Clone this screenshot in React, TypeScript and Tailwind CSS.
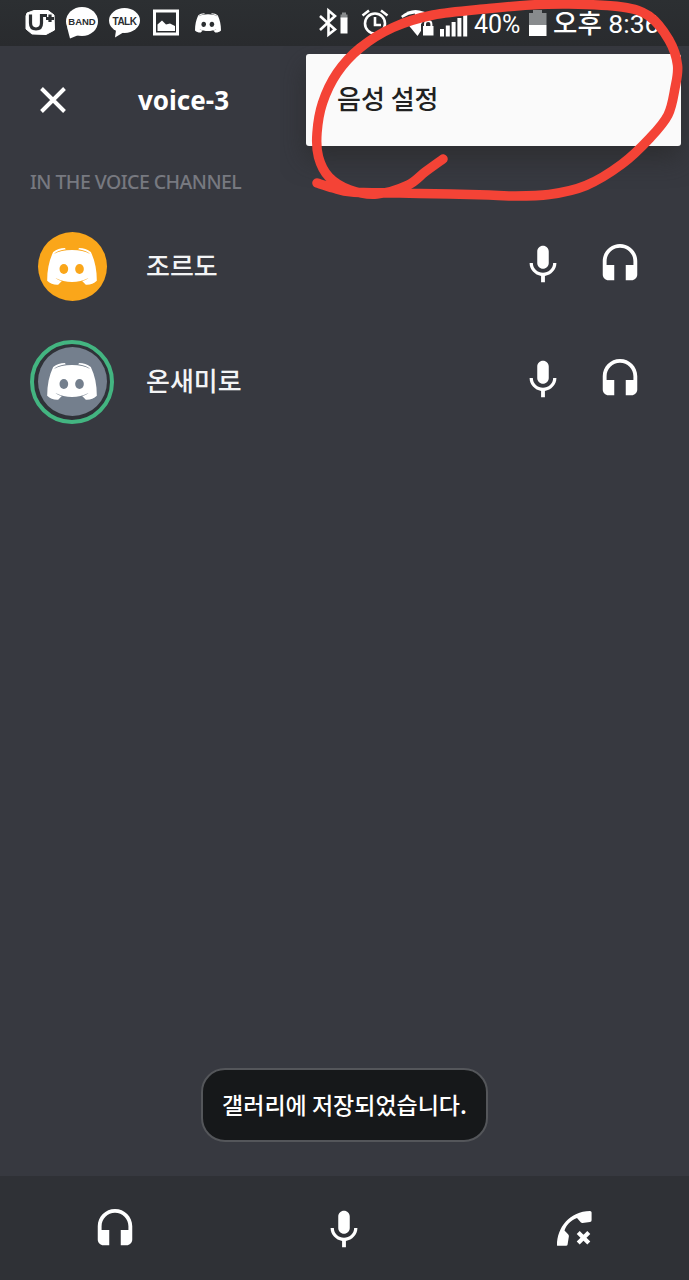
import React from "react";

function Mic() {
  return (
    <svg className="size-[46px] shrink-0" viewBox="0 0 24 24" fill="#fff">
      <path d="M12 14c1.66 0 3-1.34 3-3V5c0-1.66-1.34-3-3-3S9 3.34 9 5v6c0 1.66 1.34 3 3 3zm5.3-3c0 3-2.54 5.1-5.3 5.1S6.7 14 6.7 11H5c0 3.41 2.72 6.23 6 6.72V21h2v-3.28c3.28-.48 6-3.3 6-6.72h-1.7z" />
    </svg>
  );
}

function Headphones() {
  return (
    <svg className="size-[46px] shrink-0" viewBox="0 0 24 24" fill="#fff">
      <path d="M12 1c-4.97 0-9 4.03-9 9v7c0 1.66 1.34 3 3 3h3v-8H5v-2c0-3.87 3.13-7 7-7s7 3.13 7 7v2h-4v8h3c1.66 0 3-1.34 3-3v-7c0-4.97-4.03-9-9-9z" />
    </svg>
  );
}

function HangUp() {
  return (
    <svg className="size-[46px] shrink-0" viewBox="0 0 46 46">
      <path
        fill="#fff"
        d="M6 38.500C5.800 20 19 4.500 39 4q1.600 0 1.600 1.600v7.600q0 1.600-1.600 1.800L31.500 16q-1 .1-1.800-.8L26 11C19.500 13.500 15 18.500 13.500 23.500l3.600 3.800q.9.900.8 2L16.600 37.500q-.2 1.300-1.600 1.300H7.500q-1.500 0-1.500-.3z"
      />
      <path d="M27.200 25.500l10.600 10.600M37.800 25.500l-10.600 10.600" stroke="#fff" strokeWidth="4.200" />
    </svg>
  );
}

function Mascot({ className, eyes }: { className: string; eyes: string }) {
  return (
    <svg className={className} viewBox="0 0 149 111">
      <path
        fill="#fff"
        d="M18 12C28 4 40 0 53 0l3 4C40 6 28 11 20 18C34 10 52 6 74.500 6S115 10 129 18C121 11 109 6 93 4l3-4C109 0 121 4 131 12C143 37 149 65 149 98C140 107 128 111 116 110L105 99C113 97 119 94 124 90C93 106 56 106 25 90C30 94 36 97 44 99L33 110C21 111 9 107 0 98C0 65 6 37 18 12z"
      />
      <ellipse cx="50" cy="63" rx="13" ry="15" fill={eyes} />
      <ellipse cx="97" cy="63" rx="13" ry="15" fill={eyes} />
    </svg>
  );
}

function StatusBar() {
  return (
    <div className="flex h-[46px] shrink-0 items-start bg-linear-to-b from-[#2c2f32] to-[#292b2e] text-white">
      <svg className="ml-6 h-[46px] w-[32px] shrink-0" viewBox="24 0 32 46">
        <path d="M27 13L34 10.500L48 10.500L54 15L54.500 30L46 34.500L32 34L26 29V16z" fill="#fff" stroke="#fff" strokeWidth="1" strokeLinejoin="round" />
        <path d="M30.500 14.500V23q0 6 5.500 6t5.500-6V15.500h5.500M50 14.500V22M46 18.500h8" fill="none" stroke="#2b2e31" strokeWidth="3.200" />
      </svg>
      <svg className="ml-2.5 h-[46px] w-[33px] shrink-0 overflow-visible" viewBox="66 0 33 46">
        <ellipse cx="82" cy="21.500" rx="16" ry="14.500" fill="#fff" />
        <path d="M67 27L70 38.500L81 34z" fill="#fff" />
        <text x="82" y="25.200" textAnchor="middle" fontFamily="Liberation Sans" fontWeight="700" fontSize="9.500" fill="#2b2e31">BAND</text>
      </svg>
      <svg className="ml-2.5 h-[46px] w-[32px] shrink-0 overflow-visible" viewBox="109 0 32 46">
        <ellipse cx="124.500" cy="20.500" rx="15.500" ry="12.500" fill="#fff" />
        <path d="M116 30L115 37.500L124 32z" fill="#fff" />
        <text x="124.500" y="24.500" textAnchor="middle" fontFamily="Liberation Sans" fontWeight="700" fontSize="10" letterSpacing="-0.5" fill="#2b2e31">TALK</text>
      </svg>
      <svg className="ml-3 h-[46px] w-[26px] shrink-0" viewBox="153 0 26 46">
        <path d="M154.500 11h23v23h-23z" fill="none" stroke="#fff" strokeWidth="3" />
        <path d="M157.500 31V24.500l4.500-4L166 24.500L170 23.500L175 26V31z" fill="#fff" />
      </svg>
      <Mascot className="mt-[13px] ml-4 h-[20px] w-[26px] shrink-0" eyes="#2b2e31" />
      <svg className="ml-[97px] h-[46px] w-[152px] shrink-0" viewBox="318 0 152 46">
        <path d="M320 16l15 13.500L328.500 34.500V10.500l6.500 5.500L320 30" fill="none" stroke="#fff" strokeWidth="2.600" />
        <path d="M342 12.500h4v2h1.500v4h-7v-4h1.500z" fill="#888b8d" />
        <path d="M340.500 17.500h7v16h-7z" fill="#fff" />
        <circle cx="375" cy="23.500" r="10" fill="none" stroke="#fff" strokeWidth="2.600" />
        <path d="M375 17v8h6M362.500 15.500l6.500-5M387.500 15.500l-6.500-5" fill="none" stroke="#fff" strokeWidth="2.600" />
        <path d="M401 16Q415 4 431 16L417.500 36z" fill="#fff" />
        <path d="M403.500 19Q409 15.500 415 15" fill="none" stroke="#2b2e31" strokeWidth="3" />
        <path d="M421 23.500h1q0-5 6-5t6 5h2v14h-15z" fill="#2b2e31" />
        <path d="M423 26h10.500v9.500H423z" fill="#fff" />
        <path d="M425 26v-2q0-3 3.200-3t3.200 3v2" fill="none" stroke="#fff" strokeWidth="2" />
        <path d="M440 29h4v7.500h-4zM445.800 25.500h4v11h-4zM451.600 22h4v14.500h-4zM457.400 18h4v18.500h-4zM463.200 13h4v23.500h-4z" fill="#fff" />
      </svg>
      <span className="ml-1 w-[47px] font-['Roboto'] text-[25px] leading-[49px]">40%</span>
      <svg className="ml-[8px] h-[46px] w-[18px] shrink-0" viewBox="529 0 18 46">
        <path d="M533 10h9v3h4.500V25H529V13h4z" fill="#888b8d" />
        <path d="M529 25h17.500v11H529z" fill="#fff" />
      </svg>
      <span className="ml-[6px] font-['Roboto','Noto_Sans_CJK_KR',sans-serif] text-[26.5px] leading-[47px] font-medium whitespace-nowrap">
        오후 <span className="font-normal">8:36</span>
      </span>
    </div>
  );
}

function Member({ name, color, speaking }: { name: string; color: string; speaking?: boolean }) {
  return (
    <div className="flex h-[115px] items-center pr-[46px] pl-[30px]">
      <div className={`flex size-[84px] shrink-0 items-center justify-center rounded-full ${speaking ? "border-4 border-[#43b581] bg-[#2f3238]" : ""}`}>
        <div className="flex size-[69px] shrink-0 items-center justify-center rounded-full" style={{ backgroundColor: color }}>
          <Mascot className="h-[37px] w-[50px]" eyes={color} />
        </div>
      </div>
      <div className="-mt-[3px] ml-[32px] grow font-['Noto_Sans_CJK_KR',sans-serif] text-[26px] leading-9 font-medium text-[#f3f4f5]">{name}</div>
      <div className="-mt-[3px] flex gap-[31px]">
        <Mic />
        <Headphones />
      </div>
    </div>
  );
}

const STROKE: [number, number][] = [
  [317, 183], [333, 188], [352, 192], [400, 193], [450, 194], [489, 195], [510, 196], [549, 194.5],
  [586, 185.5], [622, 164], [650, 138], [668, 115], [675, 88], [677.5, 65], [669, 40], [649, 16],
  [622, 7], [569, 4], [530, 5], [489, 8.5], [433, 15], [393, 27.5], [360, 48], [337, 73],
  [322.5, 103], [317, 133], [318.5, 157], [329, 177], [350, 190], [377, 194], [408, 185], [425, 172], [443, 159],
];

// Catmull-Rom spline through the points, written as cubic Bézier segments
function smooth(points: [number, number][]) {
  let d = `M${points[0][0]} ${points[0][1]}`;
  for (let i = 0; i < points.length - 1; i++) {
    const a = points[Math.max(i - 1, 0)];
    const b = points[i];
    const c = points[i + 1];
    const e = points[Math.min(i + 2, points.length - 1)];
    d += `C${b[0] + (c[0] - a[0]) / 6} ${b[1] + (c[1] - a[1]) / 6} ${c[0] - (e[0] - b[0]) / 6} ${c[1] - (e[1] - b[1]) / 6} ${c[0]} ${c[1]}`;
  }
  return d;
}

export default function App() {
  return (
    <div className="relative flex h-[1280px] w-[689px] flex-col overflow-hidden bg-[#373940]">
      <StatusBar />
      <header className="flex h-[108px] items-center pl-10">
        <svg className="size-[26px]" viewBox="0 0 26 26">
          <path d="M1.500 1.500l23 23M24.500 1.500l-23 23" stroke="#fff" strokeWidth="3.900" />
        </svg>
        <h1 className="ml-[72px] font-['Noto_Sans',sans-serif] text-[26px] font-bold text-white">voice-3</h1>
      </header>
      <h2 className="h-[55px] pl-[30px] font-['Noto_Sans',sans-serif] text-[19.5px] leading-[56px] font-medium tracking-[-0.55px] text-[#777980]">IN THE VOICE CHANNEL</h2>
      <main className="grow">
        <Member name="조르도" color="#faa61a" />
        <Member name="온새미로" color="#747f8d" speaking />
      </main>
      <div className="mb-[34px] flex h-[74px] w-[287px] items-center justify-center self-center rounded-[24px] border-2 border-[#54565a] bg-[#16181a] pb-[2px] font-['Noto_Sans_CJK_KR',sans-serif] text-[23px] font-medium whitespace-nowrap text-white">갤러리에 저장되었습니다.</div>
      <footer className="grid h-[104px] grid-cols-3 items-center justify-items-center bg-[#2f3136] pt-1">
        <Headphones />
        <Mic />
        <HangUp />
      </footer>
      <div className="absolute top-[46px] right-0 left-[280px] h-[160px] overflow-hidden">
        <div className="mt-2 ml-[26px] flex h-[92px] w-[375px] items-center rounded-[3px] bg-[#fafafa] pl-[31px] font-['Noto_Sans_CJK_KR',sans-serif] text-[26px] font-medium text-[#212121] shadow-[0_12px_26px_rgba(40,40,40,0.65)]">
          <span className="-mt-1.5">음성 설정</span>
        </div>
      </div>
      <svg className="pointer-events-none absolute top-0 left-0 h-[210px] w-[689px]" viewBox="0 0 689 210">
        <path d={smooth(STROKE)} fill="none" stroke="#f44336" strokeWidth="9.500" strokeLinecap="round" strokeLinejoin="round" />
      </svg>
    </div>
  );
}
